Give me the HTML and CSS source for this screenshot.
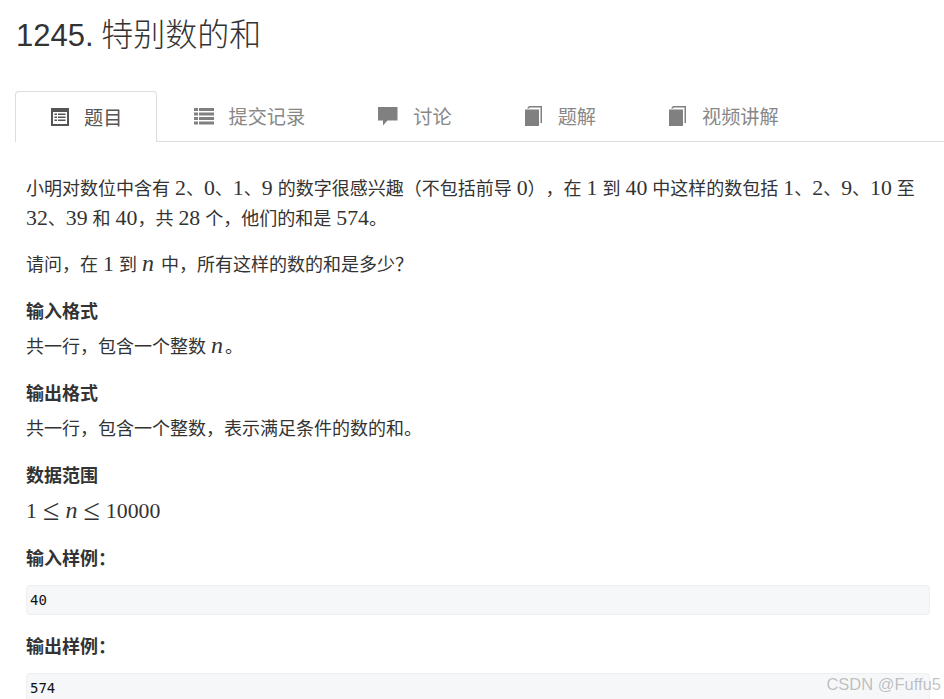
FILE: index.html
```html
<!DOCTYPE html>
<html lang="zh-CN">
<head>
    <meta charset="UTF-8">
    <meta name="viewport" content="width=device-width, initial-scale=1.0">
    <title>1245. 特别数的和</title>
    <link rel="stylesheet" href="styles.css">
</head>
<body>
    <h1 class="title">1245. <span class="title-name">特别数的和</span></h1>

    <ul class="tabs">
        <li class="tab active">
            <svg class="tab-icon narrow" viewBox="0 0 18 20"><path fill-rule="evenodd" d="M0 1h18v18H0zM2 5v12h14V5zM3.500 6.500h2.500v1.500H3.500zM7 6.500h7.500v1.500H7zM3.500 9.500h2.500v1.500H3.500zM7 9.500h7.500v1.500H7zM3.500 12.500h2.500v1.500H3.500zM7 12.500h7.500v1.500H7z"/></svg>
            <span>题目</span>
        </li>
        <li class="tab">
            <svg class="tab-icon" viewBox="0 0 20 20"><path d="M0 2h4v3H0zM5 2h15v3H5zM0 6.500h4v3H0zM5 6.500h15v3H5zM0 11h4v3H0zM5 11h15v3H5zM0 15.500h4v3H0zM5 15.500h15v3H5z"/></svg>
            <span>提交记录</span>
        </li>
        <li class="tab">
            <svg class="tab-icon" viewBox="0 0 20 20"><path d="M0 1h19.500v13.500H9.500L5 19.500v-5H0z"/></svg>
            <span>讨论</span>
        </li>
        <li class="tab">
            <svg class="tab-icon narrow" viewBox="0 0 18 20"><path d="M0 3.500h14V20H0zM2 2.500 4 0h13v17h-1.500V1.500H4.800L4 2.500z"/></svg>
            <span>题解</span>
        </li>
        <li class="tab">
            <svg class="tab-icon narrow" viewBox="0 0 18 20"><path d="M0 3.500h14V20H0zM2 2.500 4 0h13v17h-1.500V1.500H4.800L4 2.500z"/></svg>
            <span>视频讲解</span>
        </li>
    </ul>

    <div class="content">
        <p>小明对数位中含有 <span class="num">2</span>、<span class="num">0</span>、<span class="num">1</span>、<span class="num">9</span> 的数字很感兴趣（不包括前导 <span class="num">0</span>），在 <span class="num">1</span> 到 <span class="num">40</span> 中这样的数包括 <span class="num">1</span>、<span class="num">2</span>、<span class="num">9</span>、<span class="num">10</span> 至 <span class="num">32</span>、<span class="num">39</span> 和 <span class="num">40</span>，共 <span class="num">28</span> 个，他们的和是 <span class="num">574</span>。</p>
        <p>请问，在 <span class="num">1</span> 到 <i class="var">n</i> 中，所有这样的数的和是多少？</p>

        <h4>输入格式</h4>
        <p>共一行，包含一个整数 <i class="var">n</i>。</p>

        <h4>输出格式</h4>
        <p>共一行，包含一个整数，表示满足条件的数的和。</p>

        <h4>数据范围</h4>
        <p class="formula"><span class="num">1</span><span class="rel">≤</span><i class="var">n</i><span class="rel">≤</span><span class="num">10000</span></p>

        <h4>输入样例：</h4>
        <pre>40</pre>

        <h4>输出样例：</h4>
        <pre>574</pre>
    </div>

    <div class="watermark">CSDN @Fuffu5</div>
</body>
</html>
```

FILE: styles.css
```css
html, body {
    height: 699px;
    overflow: hidden;
}

body {
    position: relative;
    margin: 0;
    padding: 0 14px 0 15px;
    background-color: #fff;
    color: #333;
    font-family: "Liberation Sans", "Noto Sans CJK SC", sans-serif;
    font-size: 18px;
    text-spacing-trim: space-all;
}

.title {
    margin: 0;
    height: 91px;
    box-sizing: border-box;
    padding: 14px 0 0 1px;
    font-size: 31px;
    line-height: 42px;
    font-weight: 400;
    color: #333;
    word-spacing: -1px;
}

.title-name {
    font-size: 32px;
    font-weight: 300;
}

.tabs {
    display: flex;
    list-style: none;
    margin: 0 -14px 0 0;
    padding: 0;
    height: 51px;
    box-sizing: border-box;
    border-bottom: 1px solid #ddd;
}

.tab {
    display: flex;
    align-items: center;
    gap: 15px;
    height: 50px;
    padding: 0 36.5px;
    color: #888;
    font-size: 19.2px;
    box-sizing: border-box;
}

.tab.active {
    width: 142px;
    height: 51px;
    padding: 0 0 0 35px;
    color: #555;
    background-color: #fff;
    border: 1px solid #ddd;
    border-bottom: none;
    border-radius: 4px 4px 0 0;
}

.tab-icon {
    width: 20px;
    height: 20px;
    fill: #808080;
    flex: none;
}

.tab-icon.narrow {
    width: 18px;
}

.tab.active .tab-icon {
    fill: #555;
}

.content {
    padding: 32px 0 0 11px;
    line-height: 30px;
}

.content p {
    margin: 0 0 14px;
}

.content p + p {
    margin-top: 16px;
}

.content h4 {
    margin: 17px 0 5px;
    font-size: 18px;
    line-height: 30px;
    font-weight: 700;
    color: #333;
}

.content p.formula {
    padding-top: 1px;
}

.num, .var {
    font-family: "Liberation Serif", serif;
    font-size: 21.8px;
    line-height: 0;
}

.var {
    font-size: 24px;
    font-style: italic;
    margin-right: 2px;
}

.formula .var {
    margin-right: 0;
}

.rel {
    margin: 0 6px;
    font-family: "Liberation Serif", serif;
    font-size: 30px;
    line-height: 0;
    vertical-align: -2px;
}

pre {
    margin: 11px 0 16px;
    height: 30px;
    box-sizing: border-box;
    padding: 0 3px;
    background-color: #f6f7f9;
    border: 1px solid #eeeff1;
    border-radius: 3px;
    font-family: "DejaVu Sans Mono", monospace;
    font-size: 14px;
    line-height: 28px;
    color: #111;
}

pre + h4 {
    margin-top: 15px;
}

.watermark {
    position: absolute;
    right: 3px;
    bottom: 5px;
    font-size: 16.5px;
    color: rgba(120, 120, 120, 0.45);
}
```
